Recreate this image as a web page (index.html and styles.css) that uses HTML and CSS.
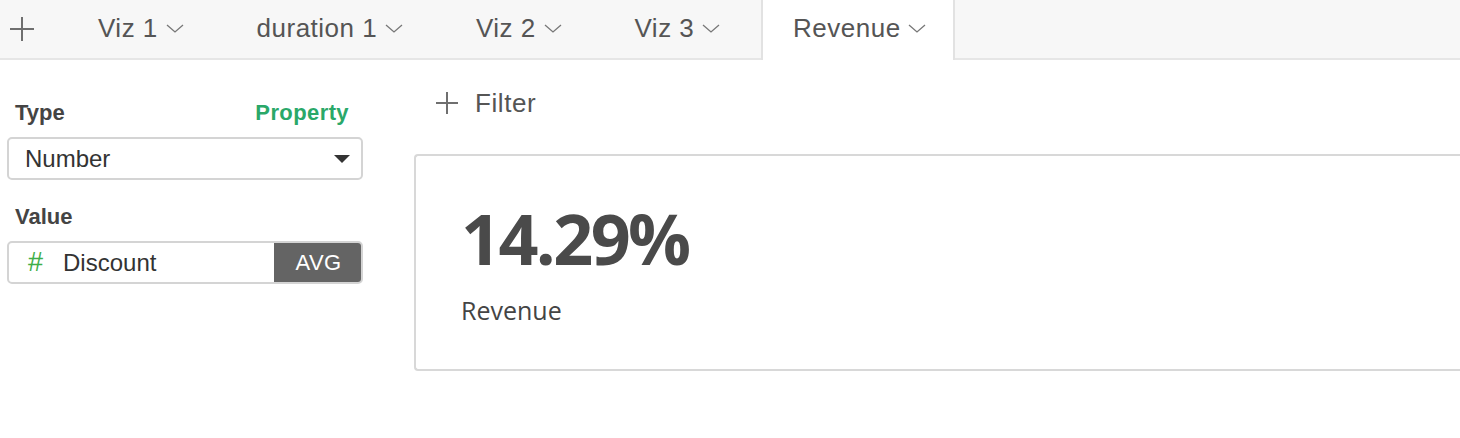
FILE: index.html
```html
<!DOCTYPE html>
<html>
<head>
    <title>Revenue</title>
    <link rel="stylesheet" href="styles.css">
</head>
<body>
    <div class="tab-bar">
        <div class="tab-add">
            <svg width="26" height="26" viewBox="0 0 26 26"><path d="M13 1V25M1 13H25" stroke="#6f6f6f" stroke-width="2" fill="none"/></svg>
        </div>
        <div class="tab">Viz 1 <svg class="chev" width="18" height="10" viewBox="0 0 18 10"><polyline points="1,1 9,8 17,1" fill="none" stroke="#777" stroke-width="1.3"/></svg></div>
        <div class="tab">duration 1 <svg class="chev" width="18" height="10" viewBox="0 0 18 10"><polyline points="1,1 9,8 17,1" fill="none" stroke="#777" stroke-width="1.3"/></svg></div>
        <div class="tab">Viz 2 <svg class="chev" width="18" height="10" viewBox="0 0 18 10"><polyline points="1,1 9,8 17,1" fill="none" stroke="#777" stroke-width="1.3"/></svg></div>
        <div class="tab">Viz 3 <svg class="chev" width="18" height="10" viewBox="0 0 18 10"><polyline points="1,1 9,8 17,1" fill="none" stroke="#777" stroke-width="1.3"/></svg></div>
        <div class="tab tab-active">Revenue <svg class="chev" width="18" height="10" viewBox="0 0 18 10"><polyline points="1,1 9,8 17,1" fill="none" stroke="#777" stroke-width="1.3"/></svg></div>
    </div>

    <div class="content">
        <div class="side-panel">
            <div class="field-head">
                <span class="field-label">Type</span>
                <span class="field-link">Property</span>
            </div>
            <div class="select-box">
                <span>Number</span>
                <svg width="16" height="8" viewBox="0 0 16 8"><polygon points="0,0 16,0 8,8" fill="#333"/></svg>
            </div>

            <div class="field-head">
                <span class="field-label">Value</span>
            </div>
            <div class="value-box">
                <span class="value-name"><span class="hash">#</span>Discount</span>
                <span class="agg">AVG</span>
            </div>
        </div>

        <div class="main">
            <div class="filter-row">
                <svg width="22" height="22" viewBox="0 0 22 22"><path d="M11 0V22M0 11H22" stroke="#6f6f6f" stroke-width="2" fill="none"/></svg>
                <span>Filter</span>
            </div>
            <div class="card">
                <div class="big-number">14.29%</div>
                <div class="card-label">Revenue</div>
            </div>
        </div>
    </div>
</body>
</html>
```

FILE: styles.css
```css
body {
    font-family: "Liberation Sans", Arial, sans-serif;
    margin: 0;
    background-color: #fff;
    color: #444;
}

.tab-bar {
    display: flex;
    height: 58px;
    background-color: #f7f7f7;
    border-bottom: 2px solid #e6e6e6;
}

.tab-add {
    width: 66px;
    display: flex;
    align-items: center;
    padding-left: 9px;
    box-sizing: border-box;
}

.tab {
    display: flex;
    align-items: center;
    padding: 0 41px 2px 32px;
    font-size: 26px;
    letter-spacing: 0.5px;
    color: #555;
    white-space: pre;
}

.tab .chev {
    margin-top: 2px;
}

.tab-active {
    background-color: #fff;
    border-left: 2px solid #e2e2e2;
    border-right: 2px solid #e2e2e2;
    margin-bottom: -2px;
    padding: 0 27px 4px 30px;
}

.content {
    display: flex;
}

.side-panel {
    width: 356px;
    margin-left: 7px;
    padding-top: 40px;
}

.field-head {
    display: flex;
    justify-content: space-between;
    align-items: center;
    height: 26px;
    padding: 0 14px 0 8px;
    margin-bottom: 11px;
}

.field-label {
    font-size: 22px;
    font-weight: bold;
    color: #444;
}

.field-link {
    font-size: 22px;
    font-weight: bold;
    letter-spacing: 0.4px;
    color: #2aa869;
}

.select-box {
    display: flex;
    justify-content: space-between;
    align-items: center;
    height: 43px;
    box-sizing: border-box;
    border: 2px solid #d4d4d4;
    border-radius: 5px;
    padding: 0 11px 0 16px;
    font-size: 24px;
    color: #333;
    margin-bottom: 24px;
}

.value-box {
    display: flex;
    height: 43px;
    box-sizing: border-box;
    border: 2px solid #d4d4d4;
    border-radius: 5px;
    overflow: hidden;
    font-size: 24px;
    color: #333;
}

.value-name {
    flex: 1;
    display: flex;
    align-items: center;
    padding-left: 19px;
}

.hash {
    color: #3fae49;
    font-size: 27px;
    margin-right: 20px;
}

.agg {
    width: 89px;
    display: flex;
    align-items: center;
    justify-content: center;
    background-color: #646464;
    color: #fff;
    font-size: 22px;
    letter-spacing: 0.4px;
    margin: -2px -2px -2px 0;
}

.main {
    flex: 1;
    margin-left: 51px;
}

.filter-row {
    display: flex;
    align-items: center;
    height: 46px;
    margin-top: 20px;
    padding-left: 22px;
    font-size: 26px;
    letter-spacing: 0.6px;
    color: #555;
}

.filter-row svg {
    margin-right: 17px;
}

.card {
    margin-top: 28px;
    height: 217px;
    box-sizing: border-box;
    border: 2px solid #d8d8d8;
    border-right: none;
    border-radius: 4px 0 0 4px;
    padding: 47px 0 0 45px;
    font-family: "Open Sans", sans-serif;
}

.big-number {
    font-size: 70px;
    font-weight: bold;
    letter-spacing: -2.6px;
    line-height: 1;
    color: #4a4a4a;
}

.card-label {
    font-size: 25px;
    color: #444;
    margin-top: 20px;
}
```
